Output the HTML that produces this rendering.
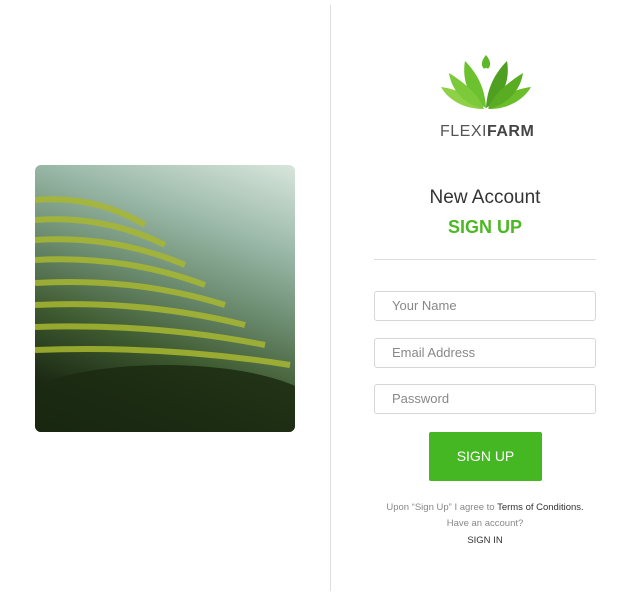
<html><head><style>
body{margin:0;width:640px;height:597px;background:#fff;font-family:"Liberation Sans",sans-serif;position:relative;overflow:hidden}
.a{position:absolute}
.in{position:absolute;left:374px;width:220px;height:28px;border:1px solid #d6d6d6;border-radius:3px;font-size:13px;color:#888;line-height:28px;text-indent:17px}
</style></head><body>
<div class="a" style="left:330px;top:5px;width:1px;height:586px;background:#ddd"></div>
<div class="a" style="left:35px;top:165px;width:260px;height:267px;border-radius:6px;overflow:hidden;background:linear-gradient(200deg,#d8e6dc 0%,#9ab8a8 25%,#6c8c70 45%,#3e5a30 65%,#1c2a14 85%,#0e140a 100%)">
<svg width="260" height="267" style="position:absolute;left:0;top:0">
<g fill="none" stroke="#a8b830" stroke-width="6" opacity="0.85">
<path d="M0 35 Q60 30 110 60"/><path d="M0 55 Q70 50 130 80"/><path d="M0 75 Q80 70 150 100"/><path d="M0 95 Q90 90 170 120"/><path d="M0 118 Q100 112 190 140"/><path d="M0 140 Q110 135 210 160"/><path d="M0 162 Q120 158 230 180"/><path d="M0 185 Q130 180 255 200"/>
</g>
<ellipse cx="130" cy="250" rx="160" ry="50" fill="#1b2a12" opacity="0.85"/>
</svg></div>
<svg class="a" style="left:437px;top:53px" width="98" height="60" viewBox="0 0 98 60">
<path d="M49 2 C44 8 43 14 49 17 C55 14 54 8 49 2Z" fill="#5fb82a"/>
<circle cx="49" cy="18" r="3" fill="#fff"/>
<path d="M49 55 C30 45 25 25 28 8 C40 20 48 35 49 55Z" fill="#6cc12e"/>
<path d="M49 55 C68 45 73 25 70 8 C58 20 50 35 49 55Z" fill="#4fa020"/>
<path d="M46 56 C25 56 10 45 4 34 C20 36 38 44 46 56Z" fill="#8ed046"/>
<path d="M52 56 C73 56 88 45 94 34 C78 36 60 44 52 56Z" fill="#6bbd2a"/>
<path d="M47 56 C30 52 15 40 12 20 C28 30 42 42 47 56Z" fill="#7cc93a"/>
<path d="M51 56 C68 52 83 40 86 20 C70 30 56 42 51 56Z" fill="#5aad22"/>
</svg>
<div class="a" style="left:440px;top:123px;font-size:16px;color:#555;letter-spacing:0.5px">FLEXI<b style="color:#444">FARM</b></div>
<div class="a" style="left:374px;width:222px;top:187px;text-align:center;font-size:19px;color:#333">New Account</div>
<div class="a" style="left:374px;width:222px;top:217px;text-align:center;font-size:18px;font-weight:bold;color:#4cb823">SIGN UP</div>
<div class="a" style="left:374px;top:259px;width:222px;height:1px;background:#ddd"></div>
<div class="in" style="top:291px">Your Name</div>
<div class="in" style="top:338px">Email Address</div>
<div class="in" style="top:384px">Password</div>
<div class="a" style="left:429px;top:432px;width:113px;height:49px;background:#45b722;border-radius:2px;color:#fff;font-size:14px;line-height:49px;text-align:center">SIGN UP</div>
<div class="a" style="left:340px;width:290px;top:502px;text-align:center;font-size:9.5px;color:#888">Upon “Sign Up” I agree to <span style="color:#333">Terms of Conditions.</span></div>
<div class="a" style="left:340px;width:290px;top:518px;text-align:center;font-size:9.5px;color:#888">Have an account?</div>
<div class="a" style="left:340px;width:290px;top:535px;text-align:center;font-size:9.5px;color:#333">SIGN IN</div>
</body></html>
